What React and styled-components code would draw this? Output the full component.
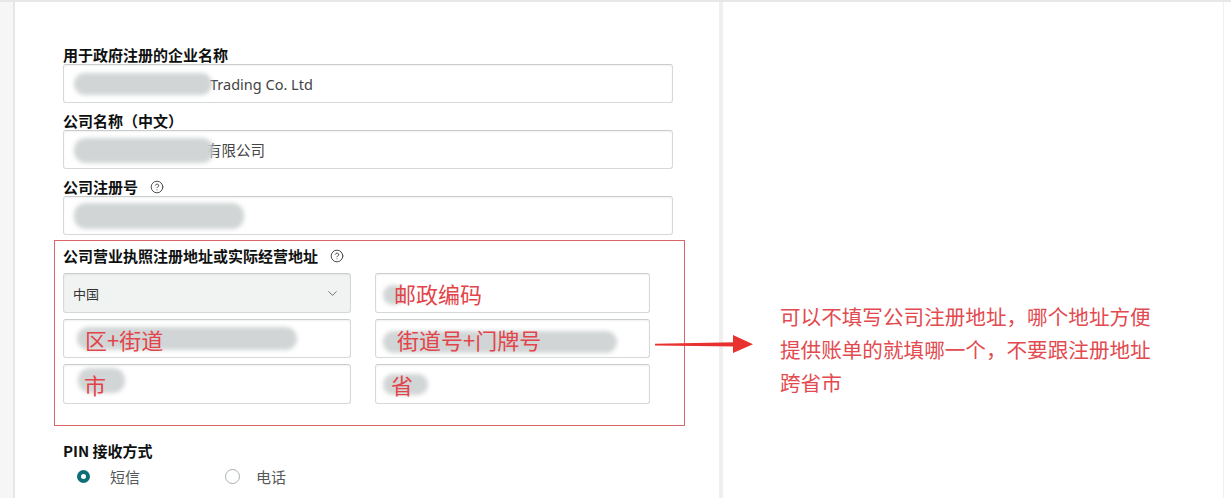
import React from "react";
import styled, { createGlobalStyle } from "styled-components";
import { ChevronDown, CircleHelp } from "lucide-react";

const GlobalStyle = createGlobalStyle`
  html, body {
    margin: 0;
    padding: 0;
    background: #ffffff;
  }
  body {
    font-family: "Noto Sans CJK SC", "Noto Sans", sans-serif;
    color: #0f1111;
  }
`;

const Page = styled.div`
  position: relative;
  display: flex;
  flex-direction: row;
  width: 1231px;
  height: 498px;
  overflow: hidden;
  border-top: 2px solid #e7e7e7;
  box-sizing: border-box;
`;

const SideStrip = styled.div`
  width: 13px;
  flex: 0 0 13px;
  background: #f6f6f6;
  border-right: 2px solid #e6e6e6;
`;

const FormPanel = styled.div`
  flex: 0 0 708px;
  box-sizing: border-box;
  padding: 44px 0 0 48px;
  border-right: 4px solid #efefef;
`;

const NotePanel = styled.div`
  flex: 1;
  padding: 298px 0 0 57px;
  border-right: 1px solid #f0f0f0;
  margin-right: 7px;
`;

const Field = styled.div`
  display: flex;
  flex-direction: column;
  width: 610px;
  margin-bottom: ${(p) => (p.$last ? 5 : 9)}px;
`;

const Label = styled.div`
  display: flex;
  align-items: center;
  gap: 12px;
  font-size: 15px;
  line-height: 17px;
  font-weight: 700;
  color: #0f1111;
  margin-bottom: 1px;
  margin-top: ${(p) => p.$top || 0}px;
`;

const Help = styled(CircleHelp)`
  color: #4a4e4e;
  flex: none;
`;

const InputBox = styled.div`
  position: relative;
  display: flex;
  align-items: center;
  box-sizing: border-box;
  height: ${(p) => p.$h || 39}px;
  width: ${(p) => p.$w || 610}px;
  padding-left: ${(p) => p.$pad || 9}px;
  border: 1px solid #d5d9d9;
  border-top-color: #c9cdcd;
  border-radius: 3px;
  background: ${(p) => (p.$select ? "#f1f3f3" : "#ffffff")};
  box-shadow: 0 1px 2px rgba(15, 17, 17, 0.06) inset;
`;

const Value = styled.span`
  position: relative;
  font-family: "Noto Sans", "Noto Sans CJK SC", sans-serif;
  font-size: 14.5px;
  color: #444;
  z-index: 0;
`;

const SelectValue = styled.span`
  flex: 1;
  font-size: 13px;
  color: #333;
`;

const Chevron = styled(ChevronDown)`
  color: #6f7373;
  margin-right: 10px;
`;

const Smudge = styled.span`
  position: absolute;
  left: ${(p) => p.$x}px;
  top: ${(p) => p.$y}px;
  width: ${(p) => p.$w}px;
  height: ${(p) => p.$h}px;
  border-radius: 12px;
  background: #cfd3d3;
  filter: blur(2px);
  opacity: 0.95;
  z-index: 1;
`;

const Mark = styled.span`
  position: relative;
  z-index: 2;
  font-family: "Noto Sans CJK SC", sans-serif;
  font-size: 22px;
  line-height: 26px;
  color: #e2444a;
  margin-left: ${(p) => p.$x || 0}px;
`;

const AddressBox = styled.div`
  width: 631px;
  box-sizing: border-box;
  margin: 0 0 0 -9px;
  padding: 6px 0 21px 8px;
  border: 1px solid #d9676a;
`;

const AddressGrid = styled.div`
  display: grid;
  grid-template-columns: 288px 275px;
  column-gap: 24px;
  row-gap: 6px;
  margin-top: 9px;
`;

const RadioRow = styled.div`
  display: flex;
  align-items: center;
  margin-top: 7px;
  height: 20px;
`;

const RadioOption = styled.label`
  display: flex;
  align-items: center;
  width: 148px;
  margin-left: ${(p) => p.$x || 0}px;
  font-size: 15px;
  color: #565959;
`;

const RadioDot = styled.span`
  box-sizing: border-box;
  width: ${(p) => (p.$on ? 13 : 15)}px;
  height: ${(p) => (p.$on ? 13 : 15)}px;
  margin-right: ${(p) => (p.$on ? 20 : 16)}px;
  border-radius: 50%;
  border: ${(p) => (p.$on ? "4px solid #0d6e78" : "1px solid #a9b0b0")};
  background: #fff;
`;

const Note = styled.p`
  margin: 0;
  width: 380px;
  font-size: 20.6px;
  line-height: 33px;
  color: #e24a4f;
`;

const Arrow = styled.svg`
  position: absolute;
  left: 655px;
  top: 330px;
`;

export default function App() {
  return (
    <>
      <GlobalStyle />
      <Page>
        <SideStrip />
        <FormPanel>
          <Field>
            <Label>用于政府注册的企业名称</Label>
            <InputBox $pad={146}>
              <Smudge $x={10} $y={8} $w={138} $h={22} />
              <Value>Trading Co. Ltd</Value>
            </InputBox>
          </Field>
          <Field>
            <Label>公司名称（中文）</Label>
            <InputBox $pad={143}>
              <Smudge $x={10} $y={7} $w={140} $h={25} />
              <Value>有限公司</Value>
            </InputBox>
          </Field>
          <Field $last>
            <Label>
              公司注册号
              <Help size={14} strokeWidth={1.7} />
            </Label>
            <InputBox>
              <Smudge $x={10} $y={6} $w={170} $h={26} />
            </InputBox>
          </Field>

          <AddressBox>
            <Label>
              公司营业执照注册地址或实际经营地址
              <Help size={14} strokeWidth={1.7} />
            </Label>
            <AddressGrid>
              <InputBox $select $w={288} $h={40}>
                <SelectValue>中国</SelectValue>
                <Chevron size={15} strokeWidth={1.6} />
              </InputBox>
              <InputBox $w={275} $h={40} $pad={7}>
                <Smudge $x={7} $y={11} $w={22} $h={20} />
                <Mark $x={11}>邮政编码</Mark>
              </InputBox>
              <InputBox $w={288} $h={39} $pad={7}>
                <Smudge $x={13} $y={7} $w={220} $h={23} />
                <Mark $x={14}>区+街道</Mark>
              </InputBox>
              <InputBox $w={275} $h={39} $pad={7}>
                <Smudge $x={7} $y={11} $w={234} $h={22} />
                <Mark $x={14}>街道号+门牌号</Mark>
              </InputBox>
              <InputBox $w={288} $h={40} $pad={7}>
                <Smudge $x={14} $y={3} $w={47} $h={25} />
                <Mark $x={13}>市</Mark>
              </InputBox>
              <InputBox $w={275} $h={40} $pad={7}>
                <Smudge $x={7} $y={9} $w={45} $h={21} />
                <Mark $x={8}>省</Mark>
              </InputBox>
            </AddressGrid>
          </AddressBox>

          <Label $top={16}>PIN 接收方式</Label>
          <RadioRow>
            <RadioOption $x={14}>
              <RadioDot $on />
              短信
            </RadioOption>
            <RadioOption>
              <RadioDot />
              电话
            </RadioOption>
          </RadioRow>
        </FormPanel>

        <NotePanel>
          <Note>
            可以不填写公司注册地址，哪个地址方便提供账单的就填哪一个，不要跟注册地址跨省市
          </Note>
        </NotePanel>

        <Arrow width="100" height="24" viewBox="0 0 100 24">
          <path d="M0 12.6 L80 11 L80 13.6 Z" fill="#e8322f" stroke="#e8322f" strokeWidth="1.6" />
          <polygon points="78,3 98,12.2 78,21" fill="#e8322f" />
        </Arrow>
      </Page>
    </>
  );
}
